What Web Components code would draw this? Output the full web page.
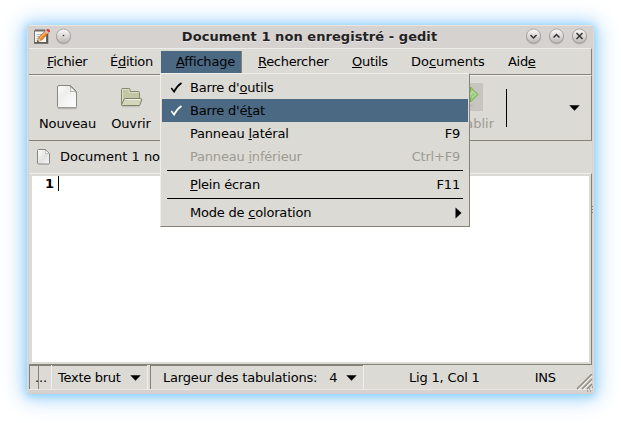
<!DOCTYPE html>
<html lang="fr"><head><meta charset="utf-8"><title>gedit</title>
<style>
body{margin:0;width:621px;height:423px;overflow:hidden;background:#fff;font:13px/16px "DejaVu Sans",sans-serif;color:#000}
</style></head><body>
<gedit-window></gedit-window>
<script>
const define=(name,html)=>customElements.define(name,class extends HTMLElement{
  constructor(){super();this.attachShadow({mode:'open'});}
  connectedCallback(){if(this.shadowRoot.childNodes.length)return;const t=document.createElement('template');t.innerHTML=typeof html==='function'?html(this):html;this.shadowRoot.append(t.content);}
});
const base='*{box-sizing:border-box}svg{display:block}';
/* Label: "_" marks the mnemonic letter. */
define('mnemonic-label',e=>`<style>:host{display:inline-block;white-space:pre}span{text-decoration:underline;text-decoration-thickness:1px;text-underline-offset:1px;text-decoration-skip-ink:none}</style>${(e.getAttribute('text')||'').replace(/_(.)/,'<span>$1</span>')}`);
define('round-button',e=>`<style>${base}:host{display:block;width:17px;height:17px}</style>
<svg width="17" height="17" viewBox="0 0 17 17"><defs><linearGradient id="g" x2="0" y2="1"><stop stop-color="#fafaf9"/><stop offset="1" stop-color="#bdb9b6"/></linearGradient></defs><circle cx="8.5" cy="9" r="7.6" fill="#a39e9b" opacity=".55"/><circle cx="8.5" cy="8" r="7" fill="url(#g)" stroke="#9d9996" stroke-width=".8"/>
${{dot:'<circle cx="8.5" cy="7.5" r=".8" fill="#333"/>',down:'<path d="M5.5 7l3 3 3-3" class="s"/>',up:'<path d="M5.5 9.500l3-3 3 3" class="s"/>',close:'<path d="M5.500 5l6 6m0-6l-6 6" class="s"/>'}[e.getAttribute('kind')]}
</svg><style>.s{fill:none;stroke:#333;stroke-width:1.5}</style>`);
define('app-icon',`<style>${base}:host{display:block}</style><svg width="17" height="17" viewBox="0 0 17 17"><path d="M.5 2.5h12v12H.5z" fill="#f8f8f6" stroke="#77776f"/><path d="M0 15h13.500V6" fill="none" stroke="#55554e" stroke-width="1.500"/><path d="M2 1v3m2-3v3m2-3v3m2-3v3m2-3v3" stroke="#666"/><path d="M2.5 6.5h7m-7 2h5m-5 2h3m-3 2h2" stroke="#b5b5b2"/><path d="M3.4 13.5l1.2-3.8L11.8 2.500l2.800 2.300-7.2 7.5z" fill="#f0872c" stroke="#a85c20" stroke-width=".8"/><path d="M5.8 10.2l7-7" stroke="#ffc078" stroke-width="1.2"/><path d="M3.2 13.7l1.3-3.5 2.6 2.3z" fill="#e8cfa0"/><path d="M3 14l.7-1.8 1.2 1z" fill="#222"/><path d="M11.7 2.3l1.4-1.1c1.4-.7 3.4.8 2.8 2.3l-1.2 1.200z" fill="#e23838"/><path d="M10.8 3.2l1.2-1.2 2.8 2.6-1.1 1.1z" fill="#c9c9c9"/></svg>`);
define('page-icon',e=>{const s=e.hasAttribute('small');return `<style>${base}:host{display:block}</style>`+(s?`<svg width="14" height="17" viewBox="0 0 14 17"><defs><linearGradient id="p" x2="1" y2="1"><stop stop-color="#fff"/><stop offset=".55" stop-color="#e2e3e0"/><stop offset="1" stop-color="#fafafa"/></linearGradient></defs><path d="M1.5.5h7l4 4v9.500q0 1-1 1h-10q-1 0-1-1v-12.500q0-1 1-1z" fill="url(#p)" stroke="#858780"/><path d="M8.500 1v3.500h3.500z" fill="#fff" stroke="#aaa" stroke-width=".6"/></svg>`:`<svg width="22" height="25" viewBox="0 0 22 25"><defs><linearGradient id="p" x2="1" y2="1"><stop stop-color="#fff"/><stop offset=".35" stop-color="#eeeeed"/><stop offset="1" stop-color="#fff"/></linearGradient></defs><path d="M1 23.500h19" stroke="#c2c2bc" stroke-width="2"/><path d="M2 .5h11.500l6 6V21.500q0 1.200-1.200 1.200H1.700q-1.200 0-1.200-1.200V2Q.5.5 2 .5z" fill="url(#p)" stroke="#868880"/><path d="M13 1q1.500 2.500.5 5.500 3-.8 5.700.8z" fill="#fff" stroke="#999b94" stroke-width=".8"/></svg>`)});
define('folder-icon',`<style>${base}:host{display:block}</style><svg width="22" height="20" viewBox="0 0 22 20"><path d="M1 18.500h18" stroke="#c2c2ba" stroke-width="1.500"/><path d="M.5 17V1.500q0-1 1-1h6.500q1 0 1 1v2h8.500q1 0 1 1V17z" fill="#c3c6a2" stroke="#85886b"/><path d="M1.500 16V1.500h6.500v3h9.500" fill="none" stroke="#dcdec8"/><path d="M4.200 10.500h15.500q1.200 0 1 1.200l-1.500 4.800q-.3 1-1.300 1H1.500q-1.200 0-.8-1.200L3 11.500q.3-1 1.200-1z" fill="#d3d6b9" stroke="#7f8268"/><path d="M4.500 11.500h15" stroke="#eff0e4"/></svg>`);
define('down-arrow',`<style>${base}:host{display:block;flex:none}</style><svg width="11" height="6"><path d="M.3.3h10.400L5.500 5.800z"/></svg>`);
define('redo-icon',`<style>${base}:host{display:block;background:#c8c5c0}</style><svg width="28" height="28"><path d="M2 8h13.500V4l7.500 7.500-7.500 7.500v-4H2z" fill="#9aca78" stroke="#73b050"/><path d="M8 11h9v-3l4 3.500-4 3" fill="none" stroke="#c1e0a3"/><ellipse cx="10" cy="22.500" rx="8" ry="1.500" fill="#b5b3ad"/></svg>`);
define('title-bar',`<style>${base}:host{display:grid;grid-template-columns:17px 17px 1fr 17px 17px 17px;column-gap:6px;height:22px;padding:2px 5px 0 6px;align-items:start;background:#d6d2d0}b{color:#222;text-align:center;line-height:18px;text-shadow:0 1px #e7e4e2;letter-spacing:.06px;padding-left:20px;white-space:nowrap}.a{margin-left:-2px}</style><app-icon></app-icon><round-button class="a" kind="dot"></round-button><b><slot></slot></b><round-button kind="down"></round-button><round-button kind="up"></round-button><round-button kind="close"></round-button>`);
define('menu-bar',`<style>${base}:host{display:grid;grid-template-columns:63px 66px 82px 94px 59px 97px 1fr;height:27px;padding:2px 0 1px 3px;border-top:1px solid #edece9;border-right:1px solid #858277;border-bottom:1px solid #858277;letter-spacing:-.3px}mnemonic-label{padding:3px 0 0 15px}.on{background:#4b6983;margin-right:1px;border-right:1px solid #858277;letter-spacing:-.2px}</style><mnemonic-label text="_Fichier"></mnemonic-label><mnemonic-label text="É_dition"></mnemonic-label><mnemonic-label class="on" text="_Affichage"></mnemonic-label><mnemonic-label text="_Rechercher"></mnemonic-label><mnemonic-label text="_Outils"></mnemonic-label><mnemonic-label style="letter-spacing:-.05px" text="Do_cuments"></mnemonic-label><mnemonic-label text="Aid_e"></mnemonic-label>`);
define('tool-bar',`<style>${base}:host{display:flex;height:66px;border:1px solid #858277;border-left:0;border-top-color:#f0efec}.b{display:flex;flex:none;flex-direction:column;align-items:center}.n{width:77px;padding-top:9px}.o{width:50px;padding-top:12px;letter-spacing:-.15px}.o folder-icon{margin-left:2px}.n span{margin-top:6px;letter-spacing:-.1px}.o span{margin-top:8px}.r{width:74px;margin-left:274px;color:#9e9b92;padding-top:7px}redo-icon{margin-left:3px}.r span{margin-top:5px;align-self:flex-end;padding-right:10px}.s{flex:none;width:1px;height:38px;background:#000;margin:13px 0 0 2px}down-arrow{margin:29px 0 0 62px}</style><div class="b n"><page-icon></page-icon><span>Nouveau</span></div><div class="b o"><folder-icon></folder-icon><span>Ouvrir</span></div><div class="b r"><redo-icon></redo-icon><span>ablir</span></div><div class="s"></div><down-arrow></down-arrow>`);
define('tab-bar',`<style>${base}:host{display:flex;height:32px;padding:8px 0 0 8px}span{margin-left:9px;white-space:nowrap}</style><page-icon small></page-icon><span><slot></slot></span>`);
define('text-editor',`<style>${base}:host{display:block;box-sizing:border-box;height:190px;background:#fff;border:solid #dbdad5;border-width:2px 2px 2px 3px}.l{display:flex;font-weight:bold}.l span{margin-left:13px;line-height:15px}.c{width:1px;height:15px;background:#000;margin-left:4px}</style><div class="l"><span>1</span><div class="c"></div></div>`);
define('status-bar',`<style>${base}:host{display:flex;box-sizing:border-box;height:25px;line-height:16px;border-bottom:1px solid #e9e8e4;letter-spacing:-.18px}div{padding-top:5px;white-space:nowrap;flex:none}.e,.t,.w{box-shadow:inset 0 1px #858277}.e{width:23px;border-left:1px solid #858277;border-right:1px solid #efeeeb;padding-left:5px;position:relative}.e:after{content:"";position:absolute;left:8px;top:1px;width:1px;height:23px;background:#858277}.t{width:96px;display:flex;padding-left:6px;border-right:1px solid #efeeeb;letter-spacing:-.27px}.w{width:214px;display:flex;padding-left:12px;margin-left:2px;border-left:1px solid #858277;border-right:1px solid #efeeeb}down-arrow{margin:5px 0 0 9px}.p{margin-left:45px}.i{margin-left:55px}</style><div class="e">...</div><div class="t">Texte brut<down-arrow></down-arrow></div><div class="w">Largeur des tabulations:&nbsp;&nbsp; 4<down-arrow></down-arrow></div><div class="p">Lig 1, Col 1</div><div class="i">INS</div>`);
define('menu-item',e=>`<style>${base}:host{display:flex;box-sizing:border-box;height:23px;padding:4px 6px 0 5px;letter-spacing:-.2px}:host([active]){background:#4b6983}:host([disabled]){color:#9e9b92}.k{width:23px;flex:none}.t{flex:1}.a{padding-right:2px}svg{margin-top:2px}</style><div class="k">${e.hasAttribute('checked')?`<svg width="17" height="12"><path d="M4.300 6l2.800 3.700Q9.500 4.300 14.500 1" fill="none" stroke="${e.hasAttribute('active')?'#fff':'#000'}" stroke-width="1.500"/></svg>`:''}</div><mnemonic-label class="t" text="${e.getAttribute('text')}"></mnemonic-label>${e.hasAttribute('submenu')?'<svg width="7" height="12"><path d="M.5.5v11L6.500 6z"/></svg>':`<span class="a">${e.getAttribute('key')||''}</span>`}`);
define('drop-menu',`<style>${base}:host{display:block;box-sizing:border-box;width:310px;height:154px;background:#dbdad5;border:1px solid;border-color:#efeeeb #858277 #858277 #efeeeb;padding:2px 1px}hr{height:1px;border:0;background:#000;margin:2px 5px}</style><menu-item checked text="Barre d'_outils"></menu-item><menu-item checked active text="Barre d'é_tat"></menu-item><menu-item text="Panneau _latéral" key="F9"></menu-item><menu-item disabled text="Panneau _inférieur" key="Ctrl+F9"></menu-item><hr><menu-item text="_Plein écran" key="F11"></menu-item><hr><menu-item submenu text="Mode de _coloration"></menu-item>`);
define('gedit-window',`<style>${base}:host{display:block;padding:25px 0 0 27px}.f{position:relative;width:567px;height:369px;border-radius:4px 4px 3px 3px;background:#d6d2d0;border:1px solid;border-color:#e9e5e2 #dedad8 #d0cdcb #dedad8;box-shadow:0 1px 6px 1px #7fd0fcaa,0 1px 14px 2px #8fd2fb90,0 1px 24px 4px #c3dffb}.c{margin:0 1px;background:#dbdad5;height:342px}.v{border-right:1px solid #858277;border-bottom:1px solid #858277;border-top:1px solid #efeeeb}drop-menu{position:absolute;left:132px;top:47px}.g{position:absolute;right:0;bottom:0}.h{position:absolute;right:-1px;top:179px}</style><div class="f"><title-bar>Document 1 non enregistré - gedit</title-bar><div class="c"><menu-bar></menu-bar><tool-bar></tool-bar><tab-bar>Document 1 no</tab-bar><div class="v"><text-editor></text-editor></div><status-bar></status-bar></div><drop-menu></drop-menu>
<svg class="g" width="17" height="19"><path d="M1 15L16 0M6 15L16 5M11 15L16 10" stroke="#8f8c82" stroke-width="1.500"/><path d="M3 15L16 2M8 15L16 7" stroke="#f5f4f1"/><path d="M11 17h1m2 0h1m-2-2h1m2-2h1" stroke="#777"/></svg>
<svg class="h" width="3" height="8"><path d="M0 1.500h2M0 4.500h2M0 7.500h2" stroke="#8b8783"/></svg></div>`);
</script></body></html>
